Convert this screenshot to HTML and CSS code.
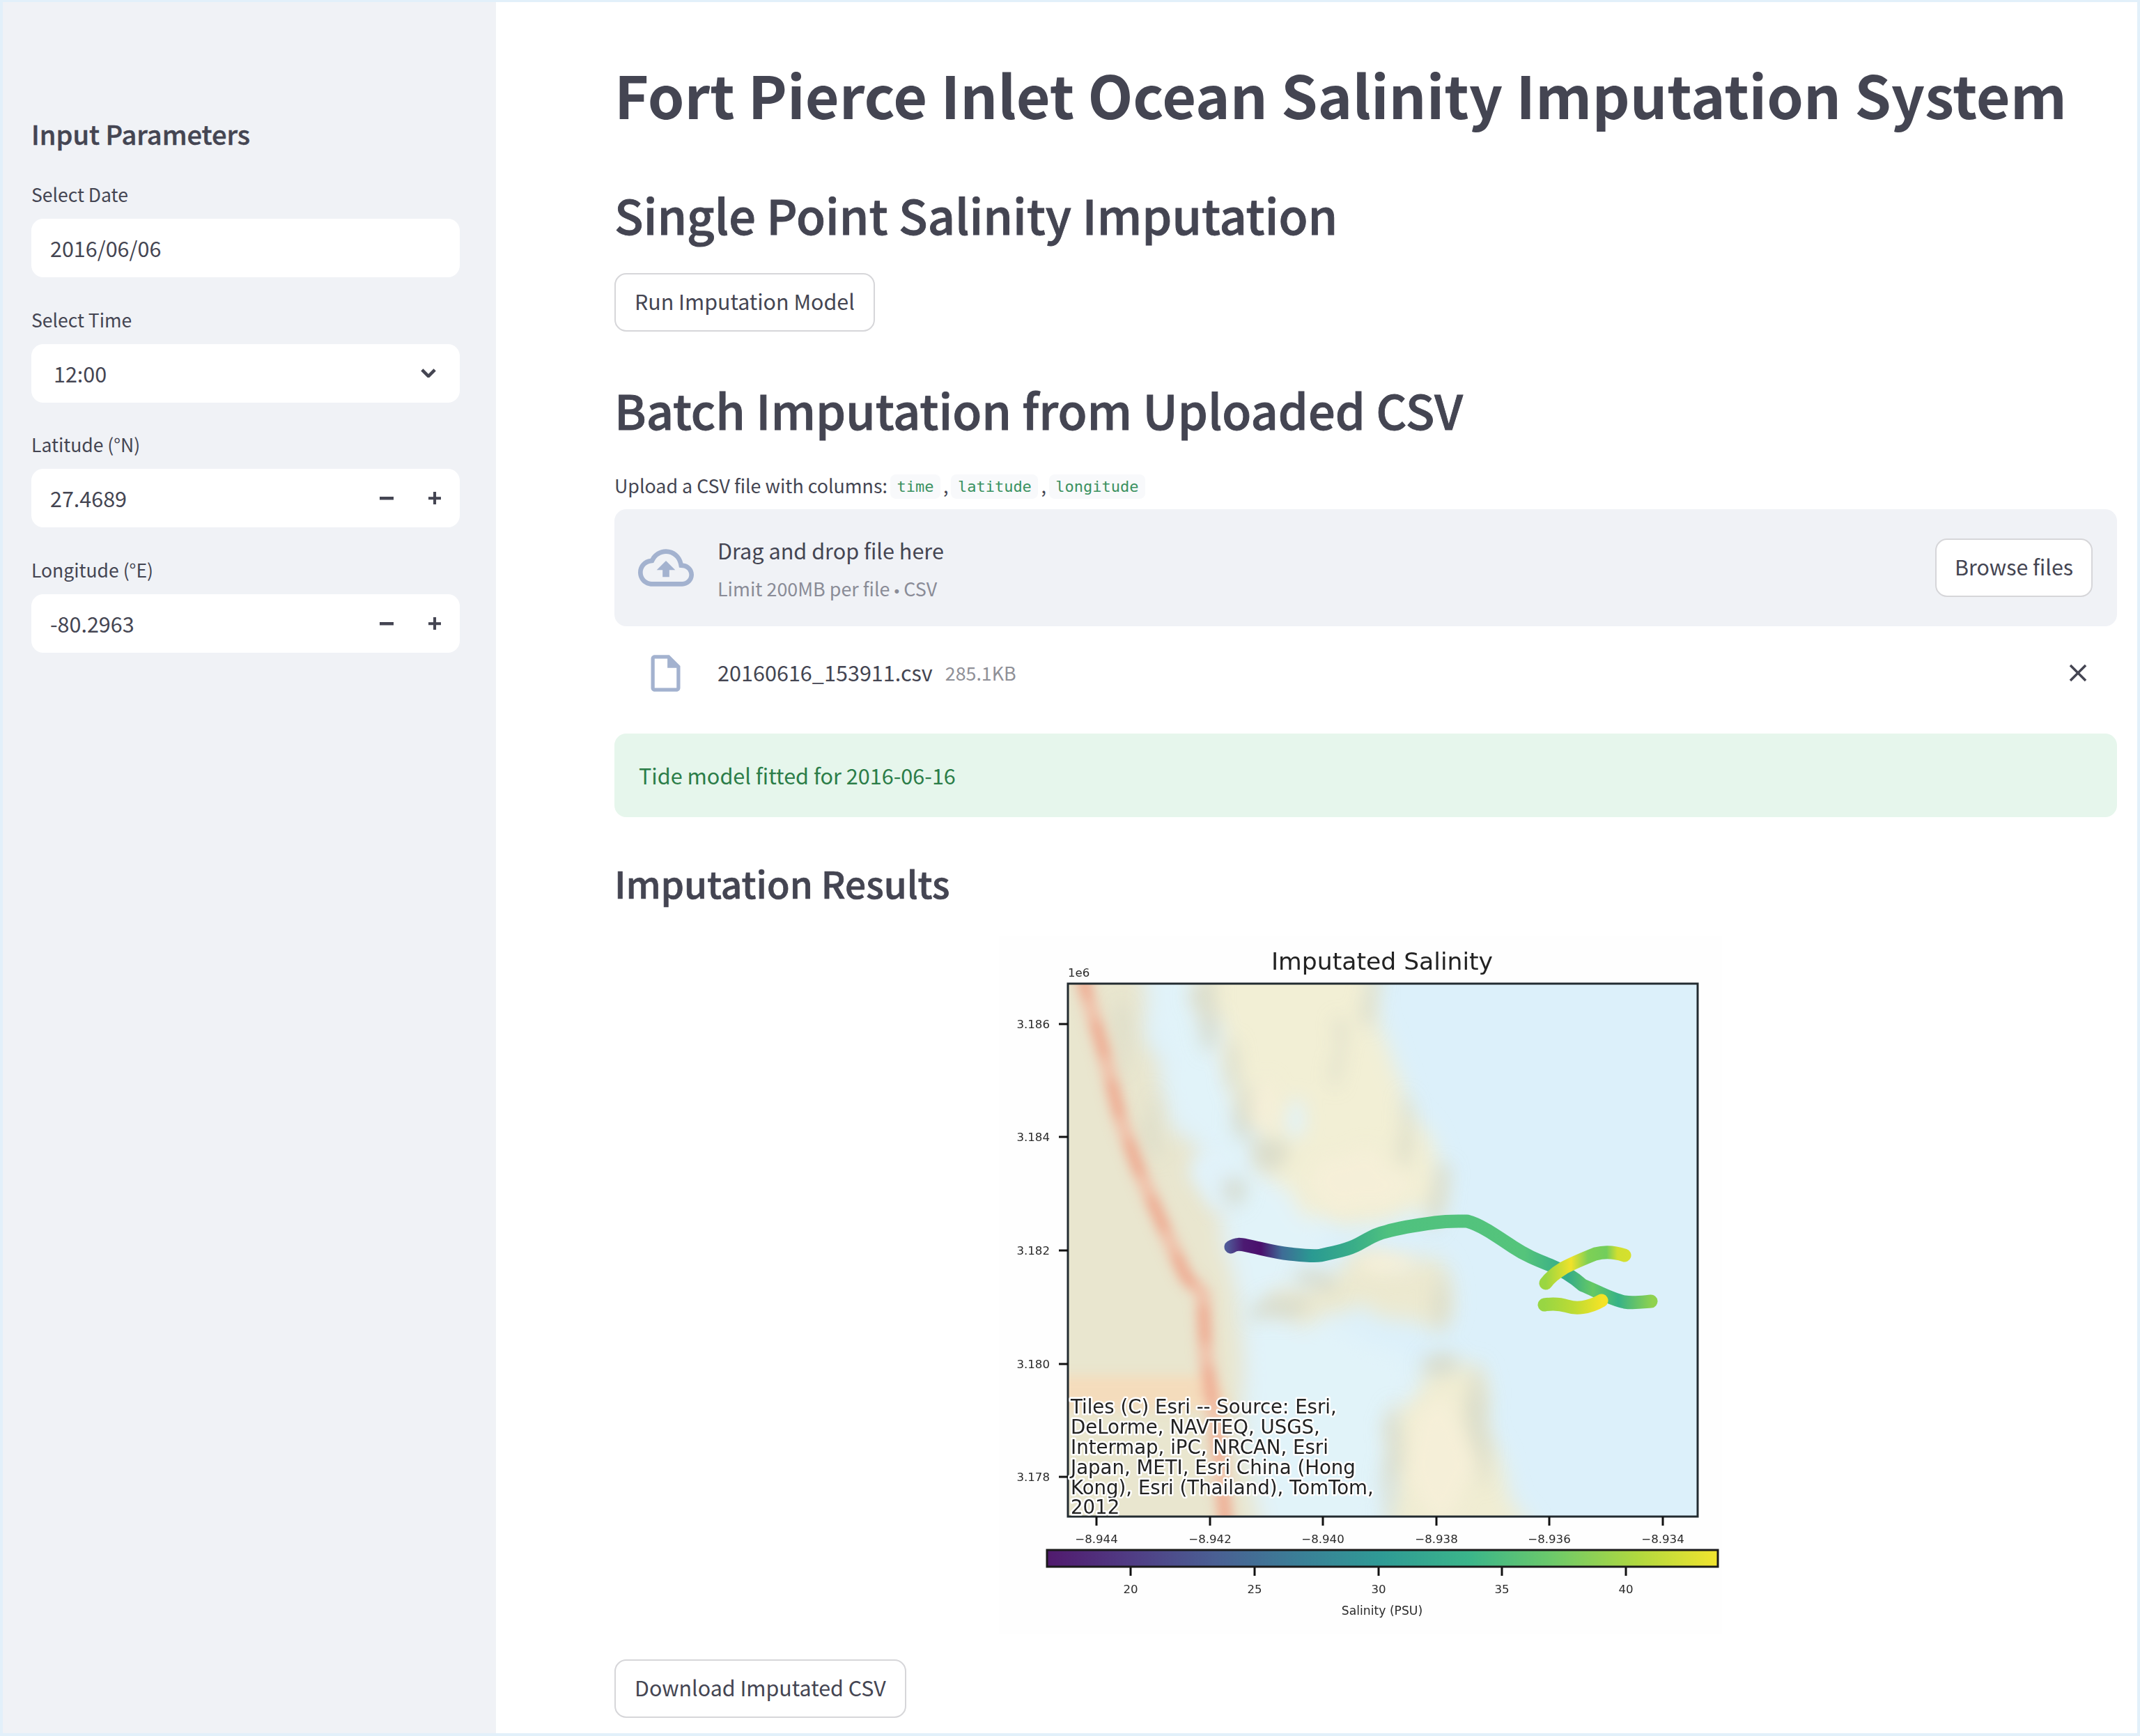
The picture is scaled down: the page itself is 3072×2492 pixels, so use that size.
FILE: index.html
```html
<!DOCTYPE html>
<html lang="en">

<head>
  <meta charset="UTF-8">
  <title>Fort Pierce Inlet Ocean Salinity Imputation System</title>
  <link rel="stylesheet" href="styles.css">
</head>

<body>
  <div class="app">

    <aside class="sidebar">
      <h2 class="side-title">Input Parameters</h2>

      <div class="field">
        <label class="field-label">Select Date</label>
        <div class="input">2016/06/06</div>
      </div>

      <div class="field">
        <label class="field-label">Select Time</label>
        <div class="input input-select">
          <span>12:00</span>
          <svg class="chevron" viewBox="0 0 24 14"><polyline points="2,2 12,12 22,2" /></svg>
        </div>
      </div>

      <div class="field">
        <label class="field-label">Latitude (°N)</label>
        <div class="input input-number">
          <span class="input-value">27.4689</span>
          <span class="step"><svg viewBox="0 0 20 20"><rect y="8" width="20" height="4.5" /></svg></span>
          <span class="step"><svg class="plus" viewBox="0 0 20 20"><rect y="8" width="20" height="4.5" /><rect x="7.8" width="4.5" height="20" /></svg></span>
        </div>
      </div>

      <div class="field">
        <label class="field-label">Longitude (°E)</label>
        <div class="input input-number">
          <span class="input-value">-80.2963</span>
          <span class="step"><svg viewBox="0 0 20 20"><rect y="8" width="20" height="4.5" /></svg></span>
          <span class="step"><svg class="plus" viewBox="0 0 20 20"><rect y="8" width="20" height="4.5" /><rect x="7.8" width="4.5" height="20" /></svg></span>
        </div>
      </div>
    </aside>

    <main class="main">
      <h1>Fort Pierce Inlet Ocean Salinity Imputation System</h1>

      <h2 class="section single">Single Point Salinity Imputation</h2>
      <button class="btn run-btn">Run Imputation Model</button>

      <h2 class="section batch">Batch Imputation from Uploaded CSV</h2>
      <p class="upload-label">Upload a CSV file with columns: <code>time</code>,<code>latitude</code>,<code>longitude</code></p>

      <div class="uploader">
        <svg class="cloud" viewBox="0 0 24 24"><path d="M19.35 10.04C18.67 6.59 15.64 4 12 4 9.11 4 6.6 5.64 5.35 8.04 2.34 8.36 0 10.91 0 14c0 3.31 2.69 6 6 6h13c2.76 0 5-2.24 5-5 0-2.64-2.05-4.78-4.65-4.96zM19 18H6c-2.21 0-4-1.79-4-4 0-2.05 1.53-3.76 3.56-3.97l1.07-.11.5-.95C8.08 7.14 9.94 6 12 6c2.62 0 4.88 1.86 5.39 4.43l.3 1.5 1.53.11c1.56.1 2.78 1.41 2.78 2.96 0 1.65-1.35 3-3 3zM8 13h2.55v3h2.9v-3H16l-4-4z" /></svg>
        <div class="drop-text">
          <div class="drop-title">Drag and drop file here</div>
          <div class="drop-limit">Limit 200MB per file <span class="dot">•</span> CSV</div>
        </div>
        <button class="btn browse-btn">Browse files</button>
      </div>

      <div class="file-row">
        <svg class="file-icon" viewBox="0 0 24 24"><path d="M14 2H6c-1.1 0-1.99.9-1.99 2L4 20c0 1.1.89 2 1.99 2H18c1.1 0 2-.9 2-2V8l-6-6zM6 20V4h7v5h5v11H6z" /></svg>
        <span class="file-name">20160616_153911.csv</span>
        <span class="file-size">285.1KB</span>
        <svg class="close" viewBox="0 0 24 24"><path d="M19 6.41L17.59 5 12 10.59 6.41 5 5 6.41 10.59 12 5 17.59 6.41 19 12 13.41 17.59 19 19 17.59 13.41 12z" /></svg>
      </div>

      <div class="alert">Tide model fitted for 2016-06-16</div>

      <h3>Imputation Results</h3>

      <div class="chart-wrap">
        <!-- viewBox is in page pixels, the map group uses its own scale -->
        <svg class="chart" viewBox="1434 1343 1038 1003">
          <defs>
            <clipPath id="mapClip"><rect x="1533" y="1412" width="904" height="765" /></clipPath>
            <filter id="blurBig" filterUnits="userSpaceOnUse" x="-100" y="-100" width="2000" height="1800">
              <feTurbulence type="fractalNoise" baseFrequency="0.009 0.004" numOctaves="2" seed="7" result="noise" />
              <feDisplacementMap in="SourceGraphic" in2="noise" scale="130" xChannelSelector="R" yChannelSelector="G" />
              <feGaussianBlur stdDeviation="30" />
            </filter>
            <filter id="blurMid" filterUnits="userSpaceOnUse" x="-100" y="-100" width="2000" height="1800">
              <feTurbulence type="fractalNoise" baseFrequency="0.012 0.006" numOctaves="2" seed="3" result="noise" />
              <feDisplacementMap in="SourceGraphic" in2="noise" scale="90" xChannelSelector="R" yChannelSelector="G" />
              <feGaussianBlur stdDeviation="26" />
            </filter>
            <filter id="blurRoad" filterUnits="userSpaceOnUse" x="-100" y="-100" width="2000" height="1800">
              <feGaussianBlur stdDeviation="17" />
            </filter>
            <linearGradient id="trackMain" gradientUnits="userSpaceOnUse" x1="1761" y1="0" x2="2372" y2="0">
              <stop offset="0" stop-color="#4f5a98" />
              <stop offset="0.04" stop-color="#4c1a72" />
              <stop offset="0.08" stop-color="#4a0f6c" />
              <stop offset="0.13" stop-color="#3e6c96" />
              <stop offset="0.2" stop-color="#2a9a92" />
              <stop offset="0.3" stop-color="#3aae88" />
              <stop offset="0.38" stop-color="#4fc17f" />
              <stop offset="0.7" stop-color="#55c47b" />
              <stop offset="0.8" stop-color="#33ab8a" />
              <stop offset="0.86" stop-color="#66c964" />
              <stop offset="0.92" stop-color="#37b287" />
              <stop offset="1" stop-color="#8fd24e" />
            </linearGradient>
            <linearGradient id="trackUpper" gradientUnits="userSpaceOnUse" x1="2219" y1="0" x2="2340" y2="0">
              <stop offset="0" stop-color="#9ad641" />
              <stop offset="0.3" stop-color="#f0e22a" />
              <stop offset="0.5" stop-color="#7ed055" />
              <stop offset="0.72" stop-color="#72cd5c" />
              <stop offset="0.85" stop-color="#d0df30" />
              <stop offset="1" stop-color="#d6e02e" />
            </linearGradient>
            <linearGradient id="trackLower" gradientUnits="userSpaceOnUse" x1="2217" y1="0" x2="2300" y2="0">
              <stop offset="0" stop-color="#98d643" />
              <stop offset="0.5" stop-color="#bcdb34" />
              <stop offset="1" stop-color="#f4e326" />
            </linearGradient>
            <linearGradient id="viridis">
              <stop offset="0" stop-color="#511a6e" />
              <stop offset="0.13" stop-color="#503e85" />
              <stop offset="0.25" stop-color="#4a5f93" />
              <stop offset="0.38" stop-color="#3a8097" />
              <stop offset="0.5" stop-color="#2f9b95" />
              <stop offset="0.63" stop-color="#3bb58a" />
              <stop offset="0.75" stop-color="#6bc96b" />
              <stop offset="0.88" stop-color="#b0d83f" />
              <stop offset="1" stop-color="#f2e42e" />
            </linearGradient>
          </defs>

          <rect class="chart-bg" x="1434" y="1343" width="1038" height="1003" />

          <g clip-path="url(#mapClip)">
            <rect x="1533" y="1412" width="904" height="765" fill="#dcf0fa" />
            <g transform="translate(1530 1410) scale(0.491)">
              <g filter="url(#blurBig)">
                <polygon fill="#e1f3f9" points="230,-120 450,-120 640,480 760,700 700,960 1000,1100 900,1700 560,1700 520,1000 440,640 320,400" />
                <polygon fill="#e9e6cf" points="-120,-120 220,-120 260,200 320,430 420,640 500,820 510,1100 570,1700 -120,1700" />
                <polygon fill="#f2efd5" points="380,-120 900,-120 960,200 1030,420 1100,600 1110,690 700,690 570,500 510,350 440,200" />
                <polygon fill="#ece9d0" points="580,960 730,880 870,810 1090,790 1110,1010 870,960 610,1000" />
                <polygon fill="#f0edd3" points="940,1700 970,1260 1070,1130 1150,1090 1200,1160 1280,1400 1360,1700" />
              </g>
              <g filter="url(#blurMid)">
                <ellipse class="map-hole" cx="680" cy="390" rx="28" ry="60" />
                <ellipse class="map-hole" cx="440" cy="570" rx="50" ry="90" />
                <ellipse class="map-mottle" cx="410" cy="90" rx="30" ry="100" />
                <ellipse class="map-mottle" cx="480" cy="240" rx="26" ry="70" />
                <ellipse class="map-mottle" cx="530" cy="400" rx="34" ry="80" />
                <ellipse class="map-mottle" cx="600" cy="500" rx="56" ry="56" />
                <ellipse class="map-mottle" cx="500" cy="610" rx="46" ry="46" />
                <ellipse class="map-mottle" cx="800" cy="220" rx="20" ry="110" />
                <ellipse class="map-mottle" cx="890" cy="50" rx="30" ry="100" />
                <ellipse class="map-mottle" cx="990" cy="430" rx="28" ry="100" />
                <ellipse class="map-mottle" cx="1080" cy="620" rx="28" ry="90" />
                <ellipse class="map-mottle" cx="170" cy="160" rx="20" ry="120" />
                <ellipse class="map-mottle" cx="260" cy="410" rx="18" ry="90" />
                <ellipse class="map-mottle" cx="730" cy="870" rx="70" ry="30" />
                <ellipse class="map-mottle" cx="630" cy="950" rx="90" ry="32" />
                <ellipse class="map-mottle" cx="1100" cy="940" rx="24" ry="90" />
                <ellipse class="map-mottle" cx="950" cy="1410" rx="26" ry="180" />
                <ellipse class="map-mottle" cx="1210" cy="1290" rx="26" ry="180" />
                <ellipse class="map-mottle" cx="1100" cy="1120" rx="50" ry="34" />
                <ellipse class="map-warm" cx="580" cy="360" rx="24" ry="60" />
                <ellipse class="map-warm" cx="850" cy="580" rx="150" ry="80" />
                <ellipse class="map-warm" cx="930" cy="820" rx="90" ry="40" />
                <ellipse class="map-warm" cx="1090" cy="1390" rx="80" ry="180" />
              </g>
              <g filter="url(#blurRoad)">
                <polygon fill="#f4dcbc" points="-60,1150 440,1150 480,1250 -60,1250" />
                <polyline class="map-road" points="40,-60 60,30 110,200 160,400 210,540 270,680 350,860 400,910 410,1100 440,1300 475,1660" />
                <polyline class="map-road-dark" points="40,-60 60,30 110,200 160,400 210,540 270,680 350,860 400,910 410,1100 440,1300 475,1660" />
              </g>
            </g>
            <path class="track" stroke="url(#trackMain)" d="M1767 1790 C1775 1785 1780 1786 1790 1788 C1810 1792 1830 1798 1851 1800 C1870 1802 1885 1804 1896 1802 C1915 1798 1935 1794 1950 1786 C1965 1778 1975 1771 1990 1768 C2010 1762 2030 1759 2060 1755 C2080 1752 2095 1753 2106 1753 C2125 1758 2145 1772 2172 1790 C2190 1802 2205 1808 2225 1816 C2240 1822 2255 1830 2272 1845 C2290 1852 2312 1865 2332 1869 C2345 1871 2358 1869 2370 1868" />
            <path class="track" stroke="url(#trackUpper)" d="M2219 1842 C2226 1832 2235 1826 2245 1820 C2258 1813 2275 1806 2290 1800 C2305 1796 2320 1798 2332 1802" />
            <path class="track" stroke="url(#trackLower)" d="M2217 1873 C2230 1871 2240 1872 2250 1875 C2262 1879 2280 1878 2299 1867" />
          </g>

          <rect class="frame" x="1533" y="1412" width="904" height="765" />

          <text class="attrib" x="1537" y="2029">Tiles (C) Esri -- Source: Esri,</text>
          <text class="attrib" x="1537" y="2058">DeLorme, NAVTEQ, USGS,</text>
          <text class="attrib" x="1537" y="2087">Intermap, iPC, NRCAN, Esri</text>
          <text class="attrib" x="1537" y="2116">Japan, METI, Esri China (Hong</text>
          <text class="attrib" x="1537" y="2145">Kong), Esri (Thailand), TomTom,</text>
          <text class="attrib" x="1537" y="2173">2012</text>

          <text class="chart-title" x="1984" y="1392">Imputated Salinity</text>
          <text class="tick" x="1533" y="1402">1e6</text>

          <g class="ticks">
            <path d="M1520 1470H1533M1520 1632H1533M1520 1795H1533M1520 1958H1533M1520 2120H1533" />
            <path d="M1574 2177V2190M1737 2177V2190M1899 2177V2190M2062 2177V2190M2224 2177V2190M2387 2177V2190" />
            <path d="M1623 2249V2262M1801 2249V2262M1979 2249V2262M2156 2249V2262M2334 2249V2262" />
          </g>

          <g class="tick tick-y">
            <text x="1507" y="1476">3.186</text>
            <text x="1507" y="1638">3.184</text>
            <text x="1507" y="1801">3.182</text>
            <text x="1507" y="1964">3.180</text>
            <text x="1507" y="2126">3.178</text>
          </g>
          <g class="tick tick-x">
            <text x="1574" y="2215">−8.944</text>
            <text x="1737" y="2215">−8.942</text>
            <text x="1899" y="2215">−8.940</text>
            <text x="2062" y="2215">−8.938</text>
            <text x="2224" y="2215">−8.936</text>
            <text x="2387" y="2215">−8.934</text>
          </g>

          <rect class="colorbar" x="1503" y="2225" width="963" height="24" fill="url(#viridis)" />

          <g class="tick tick-x">
            <text x="1623" y="2287">20</text>
            <text x="1801" y="2287">25</text>
            <text x="1979" y="2287">30</text>
            <text x="2156" y="2287">35</text>
            <text x="2334" y="2287">40</text>
            <text class="bar-label" x="1984" y="2318">Salinity (PSU)</text>
          </g>
        </svg>
      </div>

      <button class="btn download-btn">Download Imputated CSV</button>
    </main>

  </div>
</body>

</html>
```

FILE: styles.css
```css
* {
  box-sizing: border-box;
}

body {
  margin: 0;
  font-family: "Noto Sans CJK SC", "Noto Sans", sans-serif;
  color: #444552;
  background: #fff;
}

.app {
  display: flex;
  height: 100vh;
  overflow: hidden;
  border: 4px solid #e2f0fa;
  border-top-width: 3px;
}

/* sidebar */
.sidebar {
  flex: none;
  width: 708px;
  padding: 161px 52px 0 41px;
  background: #f0f2f6;
}

.side-title {
  margin: 0 0 32px;
  padding-bottom: 4px;
  font-size: 38px;
  line-height: 56px;
  font-weight: 500;
  -webkit-text-stroke: 0.5px #444552;
}

.field {
  margin-bottom: 37.6px;
}

.field-label {
  display: block;
  margin-bottom: 12px;
  font-size: 26.5px;
  line-height: 46px;
}

.input {
  display: flex;
  align-items: center;
  height: 84px;
  padding-left: 27px;
  border-radius: 17px;
  background: #fff;
  font-size: 30.5px;
}

.input-select {
  justify-content: space-between;
  padding: 0 34px 0 32px;
}

.chevron {
  width: 22px;
  height: 13px;
  fill: none;
  stroke: #444552;
  stroke-width: 5;
}

.input-number {
  padding-right: 2px;
}

.input-value {
  flex: 1;
}

.step {
  display: flex;
  align-items: center;
  justify-content: center;
  width: 69px;
  height: 100%;
}

.step svg {
  width: 20px;
  height: 20px;
  fill: #444552;
}

.step .plus {
  width: 18px;
  height: 18px;
}

/* main column */
.main {
  flex: 1;
  min-width: 0;
  padding: 87px 29px 0 170px;
}

h1 {
  margin: 0;
  padding-bottom: 12px;
  font-size: 84.3px;
  line-height: 88px;
  font-weight: 700;
  white-space: nowrap;
}

.section {
  margin: 0;
  padding-bottom: 8px;
  font-size: 68.5px;
  line-height: 76px;
  font-weight: 500;
  -webkit-text-stroke: 0.9px #444552;
}

.single {
  margin-top: 80px;
}

.batch {
  margin-top: 74px;
}

h3 {
  margin: 62px 0 0;
  padding-bottom: 6px;
  font-size: 53.2px;
  line-height: 64px;
  font-weight: 500;
  -webkit-text-stroke: 0.7px #444552;
}

.btn {
  display: block;
  height: 84px;
  padding: 0 27px 4px;
  border: 2px solid #d6d6d9;
  border-radius: 17px;
  background: #fff;
  color: #444552;
  font-family: inherit;
  font-size: 30.4px;
  white-space: nowrap;
}

.run-btn {
  margin-top: 38px;
}

.browse-btn {
  padding: 0 26px 4px;
}

.download-btn {
  margin-top: 36px;
}

.upload-label {
  height: 40px;
  margin: 43px 0 0;
  font-size: 26.8px;
  line-height: 40px;
}

code {
  margin: 0 4px;
  padding: 5px 9.5px;
  border-radius: 8px;
  background: #f8f9fb;
  color: #3a9160;
  font-family: "DejaVu Sans Mono", "Liberation Mono", monospace;
  font-size: 22px;
  vertical-align: 2px;
}

code:first-child {
  margin-left: -2px;
}

.uploader {
  display: flex;
  align-items: center;
  height: 168px;
  margin-top: 14px;
  padding: 0 35px 0 34px;
  border-radius: 17px;
  background: #f0f2f6;
}

.cloud {
  flex: none;
  width: 80px;
  height: 80px;
  fill: #a3b2cf;
}

.drop-text {
  flex: 1;
  margin-left: 34px;
  padding-top: 8px;
}

.drop-title {
  font-size: 30.6px;
  line-height: 56px;
}

.drop-limit {
  font-size: 26.9px;
  line-height: 54px;
  color: #8a8c97;
}

.dot {
  font-family: "Liberation Sans", sans-serif;
  font-size: 22px;
}

.file-row {
  display: flex;
  align-items: center;
  height: 68px;
  margin-top: 33px;
  padding: 0 35px 0 42px;
}

.file-icon {
  flex: none;
  width: 63px;
  height: 63px;
  fill: #a3b2cf;
}

.file-name {
  margin-left: 43px;
  padding-bottom: 2px;
  font-size: 30.6px;
}

.file-size {
  flex: 1;
  margin-left: 18px;
  padding-bottom: 2px;
  font-size: 26.8px;
  color: #8f9097;
}

.close {
  flex: none;
  width: 42px;
  height: 42px;
  fill: #444552;
}

.alert {
  display: flex;
  align-items: center;
  height: 120px;
  margin-top: 53px;
  padding-left: 35px;
  border-radius: 17px;
  background: #e6f6ec;
  color: #2b7d48;
  font-size: 30.6px;
}

/* chart: drawn on a free canvas */
.chart-wrap {
  display: flex;
  justify-content: center;
  margin-top: 38px;
  padding-right: 15px;
}

.chart {
  display: block;
  width: 1038px;
  height: 1003px;
  font-family: "DejaVu Sans", sans-serif;
}

.chart-bg {
  fill: #fefefe;
}

.frame {
  fill: none;
  stroke: #222b30;
  stroke-width: 3;
}

.map-hole {
  fill: #e1f2f9;
}

.map-mottle {
  fill: #d3d6c4;
  opacity: 0.7;
}

.map-warm {
  fill: #f5efd8;
}

.map-road {
  fill: none;
  stroke: #f1bda6;
  stroke-width: 40;
  stroke-linejoin: round;
}

.map-road-dark {
  fill: none;
  stroke: #ee9f84;
  stroke-width: 30;
  stroke-dasharray: 110 70;
  opacity: 0.8;
}

.track {
  fill: none;
  stroke-width: 19;
  stroke-linecap: round;
  stroke-linejoin: round;
}

.attrib {
  font-size: 27.6px;
  fill: #222;
  stroke: #fff;
  stroke-width: 5px;
  stroke-linejoin: round;
  paint-order: stroke;
}

.chart-title {
  font-size: 34.6px;
  fill: #222;
  text-anchor: middle;
}

.tick {
  font-size: 16.6px;
  fill: #2a2a2a;
}

.tick .bar-label {
  font-size: 17.2px;
}

.tick-y text {
  text-anchor: end;
}

.tick-x text {
  text-anchor: middle;
}

.ticks path {
  fill: none;
  stroke: #111;
  stroke-width: 3;
}

.colorbar {
  stroke: #1a1a1a;
  stroke-width: 3;
}
```
